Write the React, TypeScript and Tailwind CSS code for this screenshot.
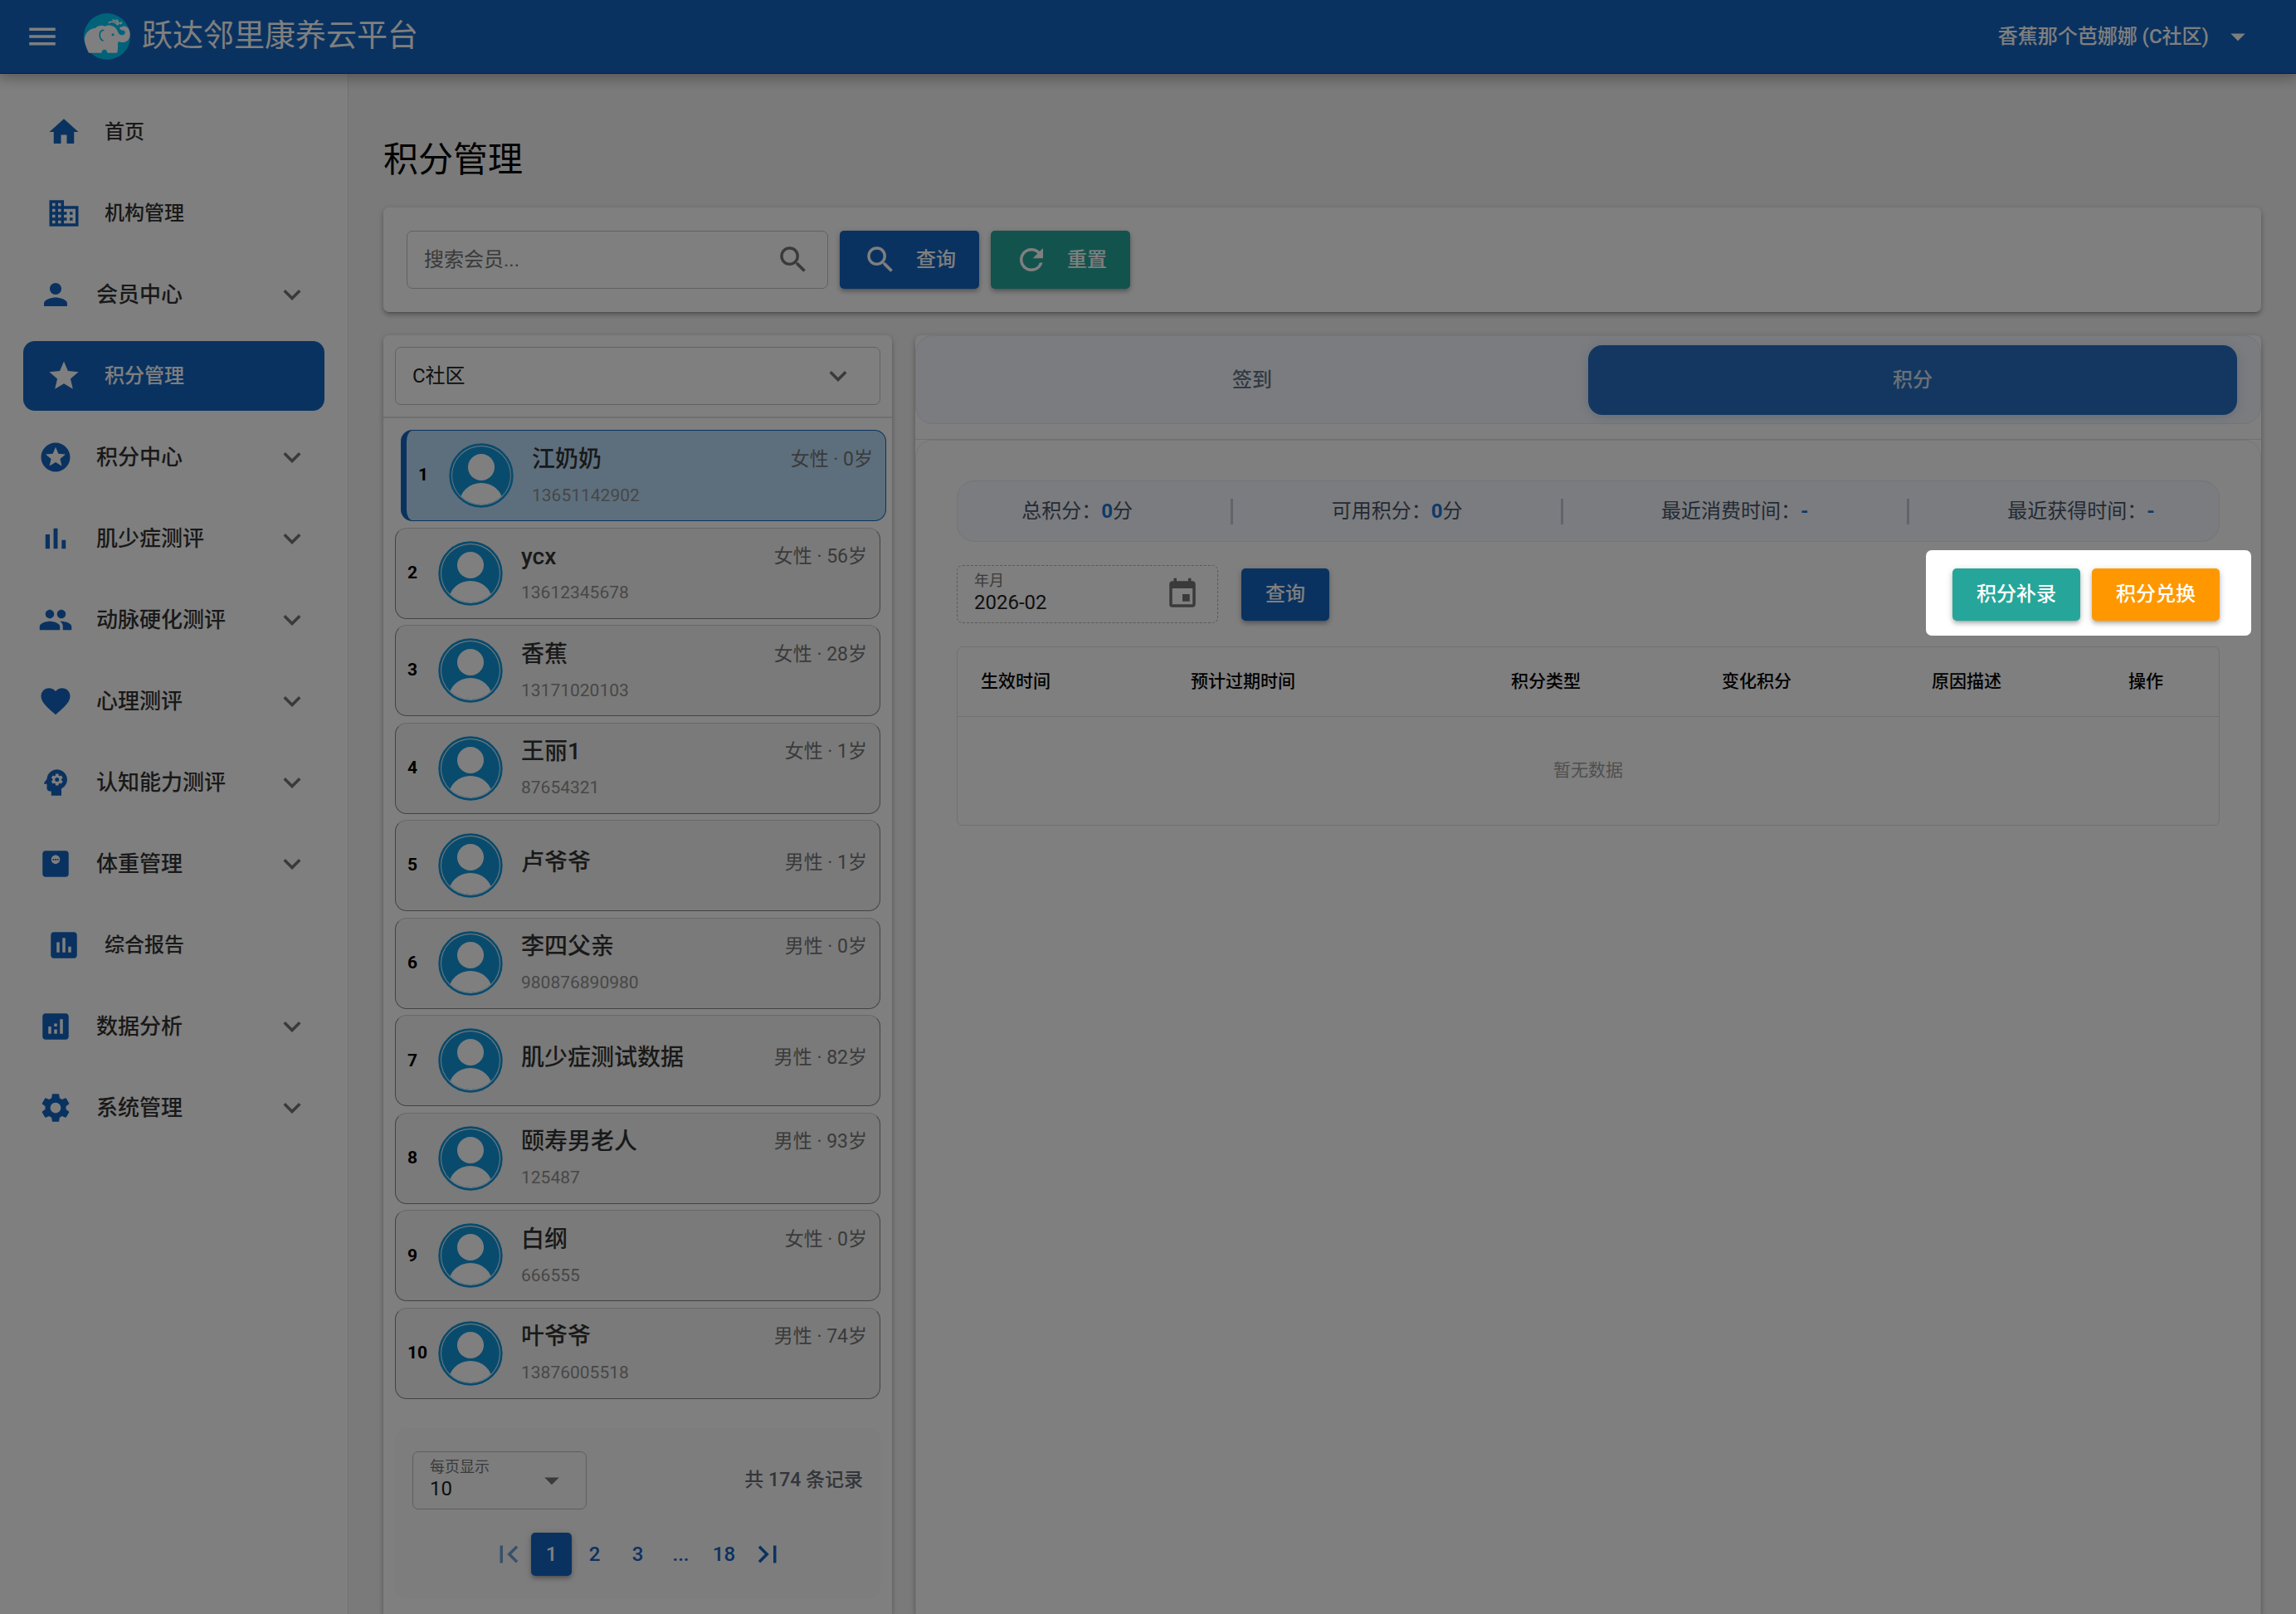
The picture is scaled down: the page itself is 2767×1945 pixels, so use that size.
import type { ReactNode } from "react";
import { clsx } from "clsx";
import type { IconType } from "react-icons";
import {
  MdAnalytics,
  MdArrowDropDown,
  MdAssessment,
  MdBusiness,
  MdEvent,
  MdFavorite,
  MdFirstPage,
  MdHome,
  MdKeyboardArrowDown,
  MdLastPage,
  MdMenu,
  MdMonitorWeight,
  MdPeople,
  MdPerson,
  MdPsychology,
  MdRefresh,
  MdSearch,
  MdSettings,
  MdStar,
  MdStars,
} from "react-icons/md";

const cardShadow =
  "shadow-[0_2px_9px_rgba(0,0,0,0.2),0_4px_4px_rgba(0,0,0,0.14),0_5px_2px_-4px_rgba(0,0,0,0.12)]";

function BarsIcon({ className }: { className?: string }) {
  return (
    <svg viewBox="0 0 24 24" fill="currentColor" className={className} aria-hidden="true">
      <path d="M5 9.2h3V19H5zM10.6 5h2.8v14h-2.8zm5.6 8H19v6h-2.8z" />
    </svg>
  );
}

type NavItem = {
  label: string;
  icon: IconType | typeof BarsIcon;
  group?: boolean;
  active?: boolean;
};

const navItems: NavItem[] = [
  { label: "首页", icon: MdHome },
  { label: "机构管理", icon: MdBusiness },
  { label: "会员中心", icon: MdPerson, group: true },
  { label: "积分管理", icon: MdStar, active: true },
  { label: "积分中心", icon: MdStars, group: true },
  { label: "肌少症测评", icon: BarsIcon, group: true },
  { label: "动脉硬化测评", icon: MdPeople, group: true },
  { label: "心理测评", icon: MdFavorite, group: true },
  { label: "认知能力测评", icon: MdPsychology, group: true },
  { label: "体重管理", icon: MdMonitorWeight, group: true },
  { label: "综合报告", icon: MdAssessment },
  { label: "数据分析", icon: MdAnalytics, group: true },
  { label: "系统管理", icon: MdSettings, group: true },
];

const members = [
  { name: "江奶奶", phone: "13651142902", gender: "女性", age: 0 },
  { name: "ycx", phone: "13612345678", gender: "女性", age: 56 },
  { name: "香蕉", phone: "13171020103", gender: "女性", age: 28 },
  { name: "王丽1", phone: "87654321", gender: "女性", age: 1 },
  { name: "卢爷爷", phone: "", gender: "男性", age: 1 },
  { name: "李四父亲", phone: "980876890980", gender: "男性", age: 0 },
  { name: "肌少症测试数据", phone: "", gender: "男性", age: 82 },
  { name: "颐寿男老人", phone: "125487", gender: "男性", age: 93 },
  { name: "白纲", phone: "666555", gender: "女性", age: 0 },
  { name: "叶爷爷", phone: "13876005518", gender: "男性", age: 74 },
];

const stats = [
  { label: "总积分：", value: "0", unit: "分" },
  { label: "可用积分：", value: "0", unit: "分" },
  { label: "最近消费时间：", value: "-", unit: "" },
  { label: "最近获得时间：", value: "-", unit: "" },
];

const columns = [
  { title: "生效时间", width: "w-[253px]" },
  { title: "预计过期时间", width: "w-[386px]" },
  { title: "积分类型", width: "w-[254px]" },
  { title: "变化积分", width: "w-[253px]" },
  { title: "原因描述", width: "w-[237px]" },
  { title: "操作", width: "w-auto" },
];

function Logo() {
  return (
    <svg viewBox="19 18 168 168" className="size-14 shrink-0" aria-hidden="true">
      <circle cx="103" cy="102" r="84" fill="#00c6f5" />
      <path
        fill="#fff"
        d="M37 161C29 146 22 128 21 112C24 88 40 73 62 71C70 62 84 60 95 65C112 57 132 64 140 80C144 92 150 98 158 97C168 95 171 87 166 82C162 78 156 80 152 77C145 72 149 66 157 68C161 62 176 64 182 76C188 90 188 106 178 116C168 124 154 125 145 120C141 126 142 134 142 142L141 156Q141 161 136 161L104 161C104 145 83 145 83 161Z"
      />
      <path d="M90 79C73 80 72 108 88 117" fill="none" stroke="#00c6f5" strokeWidth="5" strokeLinecap="round" />
      <circle cx="124" cy="95" r="4.500" fill="#00c6f5" />
      <g fill="none" stroke="#fff" strokeLinecap="round">
        <path d="M110 52C120 46 132 50 141 59" strokeWidth="5" />
        <path d="M124 43C133 43 140 48 144 57" strokeWidth="5" />
        <path d="M139 41L146 54" strokeWidth="4" />
        <path d="M152 54L154 53" strokeWidth="8" />
      </g>
    </svg>
  );
}

function Avatar() {
  return (
    <svg viewBox="0 0 78 78" className="size-[78px] shrink-0" aria-hidden="true">
      <defs>
        <clipPath id="avatar-disc">
          <circle cx="39" cy="39" r="35" />
        </clipPath>
      </defs>
      <circle cx="39" cy="39" r="37.300" fill="#fff" fillOpacity="0.500" stroke="#1296db" strokeWidth="2.800" />
      <g clipPath="url(#avatar-disc)">
        <rect width="78" height="78" fill="#1296db" />
        <circle cx="39" cy="29" r="16" fill="#fff" />
        <ellipse cx="39" cy="72" rx="26" ry="24" fill="#fff" />
      </g>
    </svg>
  );
}

function ActionButton({ className, children }: { className: string; children: ReactNode }) {
  return (
    <button
      type="button"
      className={clsx("flex items-center rounded-[5px] text-2xl font-medium text-white", cardShadow, className)}
    >
      {children}
    </button>
  );
}

function Header() {
  return (
    <header className="relative z-10 flex h-[89px] shrink-0 items-center border-b border-[#0d3f78] bg-[#1565c0] pr-[49px] pl-[30px] text-white shadow-[0_0_18px_4px_rgba(0,0,0,0.2),0_0_18px_rgba(0,0,0,0.24)]">
      <button type="button" aria-label="菜单">
        <MdMenu className="size-[42px]" />
      </button>
      <a href="#" className="ml-[29px] flex items-center gap-[14px] text-[37px] leading-[56px]">
        <Logo />
        跃达邻里康养云平台
      </a>
      <button type="button" className="ml-auto flex items-center gap-[14px] text-2xl font-medium">
        香蕉那个芭娜娜 (C社区)
        <MdArrowDropDown className="size-[42px]" />
      </button>
    </header>
  );
}

function Sidebar() {
  return (
    <nav className="flex w-[420px] shrink-0 flex-col gap-[14px] border-r border-black/12 bg-white px-7 pt-7 font-medium">
      {navItems.map(({ label, icon: Icon, group, active }) => (
        <a
          key={label}
          href="#"
          className={clsx(
            "flex h-[84px] items-center gap-7 rounded-[14px]",
            group ? "px-[18px] text-[26px]" : "px-7 text-2xl",
            active ? "bg-[#1565c0] text-white" : "text-[#333]",
          )}
        >
          <Icon className={clsx("size-[42px]", !active && "text-[#1565c0]")} />
          <span>{label}</span>
          {group && <MdKeyboardArrowDown className="ml-auto size-[42px] text-[#757575]" />}
        </a>
      ))}
    </nav>
  );
}

function SearchCard() {
  return (
    <section className={clsx("flex gap-[14px] rounded-[7px] bg-white p-7", cardShadow)}>
      <label className="flex h-[70px] w-[508px] items-center rounded-[7px] border border-[#c2c2c2] px-5">
        <input
          type="text"
          aria-label="搜索会员"
          placeholder="搜索会员..."
          className="min-w-0 flex-1 text-2xl outline-none placeholder:text-[#757575]"
        />
        <MdSearch className="size-[42px] text-[#757575]" />
      </label>
      <ActionButton className="gap-[22px] bg-[#1565c0] px-7">
        <MdSearch className="size-[42px]" />
        查询
      </ActionButton>
      <ActionButton className="gap-[22px] bg-[#26a69a] px-7">
        <MdRefresh className="size-[42px]" />
        重置
      </ActionButton>
    </section>
  );
}

function MemberList() {
  return (
    <ul className="mt-[14px] flex h-[1168px] flex-col justify-between px-[14px]">
      {members.map((member, index) => (
        <li key={member.name}>
          <button
            type="button"
            className={clsx(
              "flex h-[110px] w-full items-center rounded-[14px] border pr-[15px] pl-[14px] text-left",
              index === 0
                ? "translate-x-[7px] border-l-[7px] border-[#1565c0] bg-[#bbdefb]"
                : "border-[#858585] border-t-[#d0d0d0] bg-[#f5f5f5]",
            )}
          >
            <span className="w-[37px] text-[21px] font-bold text-black">{index + 1}</span>
            <Avatar />
            <span className={clsx("ml-[22px] flex flex-1 flex-col gap-[11px]", !member.phone && "pb-1.5")}>
              <span className="flex items-center justify-between">
                <span className="text-[28px] leading-9 font-medium text-[#333]">{member.name}</span>
                <span className="text-[23px] leading-9 text-[#757575]">
                  {member.gender} · {member.age}岁
                </span>
              </span>
              {member.phone && <span className="text-[21px] leading-7 text-[#8f8f8f]">{member.phone}</span>}
            </span>
          </button>
        </li>
      ))}
    </ul>
  );
}

function Pagination() {
  return (
    <div className="mx-[14px] mt-[35px] rounded-[14px] bg-[#fafafa] px-[21px] pt-7 pb-7">
      <div className="flex items-center justify-between">
        <div className="relative h-[70px] w-[210px] rounded-[7px] border border-[#bdbdbd] pt-[7px]">
          <label htmlFor="page-size" className="block pl-5 text-lg leading-[22px] text-[#757575]">
            每页显示
          </label>
          <select id="page-size" className="block w-full appearance-none pl-5 text-2xl leading-[30px] text-[#212121] outline-none">
            <option>10</option>
          </select>
          <MdArrowDropDown className="pointer-events-none absolute top-[13px] right-5 size-[42px] text-[#757575]" />
        </div>
        <span className="text-[23px] font-medium text-[#666b75]">共 174 条记录</span>
      </div>
      <div className="mt-7 flex justify-center gap-[3px] text-2xl font-medium text-[#1565c0]">
        <button type="button" aria-label="首页" disabled className="flex h-[52px] w-[49px] items-center justify-center opacity-60">
          <MdFirstPage className="size-[42px]" />
        </button>
        <button type="button" className={clsx("h-[52px] w-[49px] rounded-[5px] bg-[#1565c0] text-white", cardShadow)}>
          1
        </button>
        {["2", "3", "...", "18"].map((page) => (
          <button key={page} type="button" className="h-[52px] w-[49px]">
            {page}
          </button>
        ))}
        <button type="button" aria-label="末页" className="flex h-[52px] w-[49px] items-center justify-center">
          <MdLastPage className="size-[42px]" />
        </button>
      </div>
    </div>
  );
}

function MemberPanel() {
  return (
    <section className={clsx("w-[613px] shrink-0 rounded-t-[7px] bg-white", cardShadow)}>
      <div className="border-b-2 border-black/12 p-[14px]">
        <div className="relative">
          <select
            aria-label="社区"
            className="h-[70px] w-full appearance-none rounded-[7px] border border-[#c2c2c2] px-5 text-2xl text-[#212121] outline-none"
          >
            <option>C社区</option>
          </select>
          <MdKeyboardArrowDown className="pointer-events-none absolute top-[14px] right-[30px] size-[42px] text-[#757575]" />
        </div>
      </div>
      <MemberList />
      <Pagination />
    </section>
  );
}

function StatsBar() {
  return (
    <div className="flex h-[74px] items-center justify-around rounded-[21px] border border-[#e6e9f3] bg-[#f6f8fe] px-[18px] text-2xl text-[#475569]">
      {stats.flatMap((stat, index) => [
        index > 0 && <span key={`divider-${stat.label}`} className="h-[31px] w-[3px] bg-[#c5c8d8]" />,
        <span key={stat.label}>
          {stat.label}
          <b className="font-bold text-[#1976d2]">{stat.value}</b>
          {stat.unit}
        </span>,
      ])}
    </div>
  );
}

function FilterRow() {
  return (
    <div className="mt-7 flex items-center">
      <div className="flex h-[70px] w-[315px] rounded-[7px] border border-dashed border-[#b5b5b5] pr-[21px] pl-5">
        <div className="min-w-0 flex-1 pt-[7px]">
          <label htmlFor="month" className="block text-lg leading-[22px] text-[#757575]">
            年月
          </label>
          <input
            id="month"
            type="text"
            defaultValue="2026-02"
            className="block w-full text-2xl leading-[30px] text-[#212121] outline-none"
          />
        </div>
        <button type="button" aria-label="选择年月">
          <MdEvent className="size-[42px] text-[#757575]" />
        </button>
      </div>
      <ActionButton className="ml-7 h-[63px] bg-[#1565c0] px-[29px]">查询</ActionButton>
      <div className="relative ml-auto flex gap-[14px]">
        <ActionButton className="h-[63px] bg-[#26a69a] px-[29px]">积分补录</ActionButton>
        <ActionButton className="h-[63px] bg-[#ff9800] px-[29px]">积分兑换</ActionButton>
        {/* Guided tour spotlight: everything outside this box is dimmed */}
        <div className="pointer-events-none absolute -top-[22px] -right-[38px] -bottom-[18px] -left-8 z-50 rounded-[7px] shadow-[0_0_0_9999px_rgba(0,0,0,0.5)]" />
      </div>
    </div>
  );
}

function PointsTable() {
  return (
    <div className="mt-7 overflow-hidden rounded-[7px] border border-black/12">
      <table className="w-full table-fixed text-left text-[21px]">
        <thead>
          <tr className="h-[83px] border-b border-black/12">
            {columns.map((column) => (
              <th key={column.title} className={clsx("px-7 font-medium text-black", column.width)}>
                {column.title}
              </th>
            ))}
          </tr>
        </thead>
        <tbody>
          <tr className="h-[131px]">
            <td colSpan={columns.length} className="text-center text-[#9e9e9e]">
              暂无数据
            </td>
          </tr>
        </tbody>
      </table>
    </div>
  );
}

function PointsPanel() {
  return (
    <section className={clsx("flex min-w-0 flex-1 flex-col rounded-t-[7px] bg-white", cardShadow)}>
      <div
        role="tablist"
        className="flex gap-[14px] rounded-[21px] border border-[#e6e9f3] bg-[#f6f8fe] pt-[11px] pr-7 pb-[10px] pl-[14px] text-2xl font-medium"
      >
        <button type="button" role="tab" aria-selected="false" className="h-[84px] flex-1 rounded-[17px] text-[#64748b]">
          签到
        </button>
        <button
          type="button"
          role="tab"
          aria-selected="true"
          className="h-[84px] flex-1 rounded-[17px] bg-[#276fc1] text-[#d5e1ef] shadow-[0_2px_14px_rgba(21,101,192,0.2)]"
        >
          积分
        </button>
      </div>
      <div className="mt-[18px] flex flex-1 flex-col border-t border-black/12">
        <div className="flex-1 rounded-t-[21px] border border-b-0 border-[#e6e9f3] px-[49px] pt-12">
          <StatsBar />
          <FilterRow />
          <PointsTable />
        </div>
      </div>
    </section>
  );
}

export default function App() {
  return (
    <div className="flex h-screen flex-col overflow-hidden bg-[#f5f5f5] font-['Roboto','Noto_Sans_CJK_SC',sans-serif]">
      <Header />
      <div className="flex min-h-0 flex-1">
        <Sidebar />
        <main className="flex min-w-0 flex-1 flex-col px-[42px] pt-[76px]">
          <h1 className="mb-[29px] text-[42px] leading-[56px] text-black">积分管理</h1>
          <SearchCard />
          <div className="mt-7 flex min-h-0 flex-1 gap-7">
            <MemberPanel />
            <PointsPanel />
          </div>
        </main>
      </div>
    </div>
  );
}
